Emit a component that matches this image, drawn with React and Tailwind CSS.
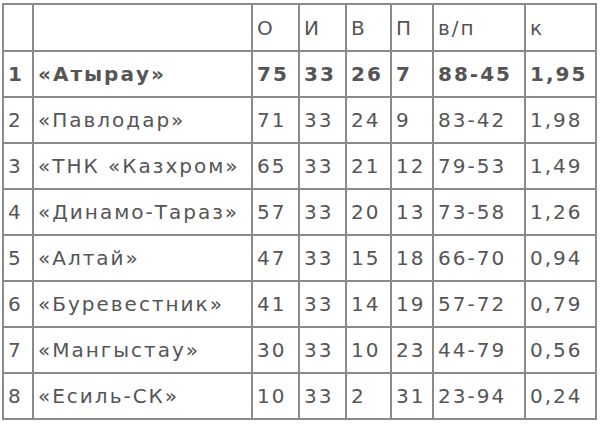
import React from "react";

const rows = [
  ["1", "«Атырау»", "75", "33", "26", "7", "88-45", "1,95"],
  ["2", "«Павлодар»", "71", "33", "24", "9", "83-42", "1,98"],
  ["3", "«ТНК «Казхром»", "65", "33", "21", "12", "79-53", "1,49"],
  ["4", "«Динамо-Тараз»", "57", "33", "20", "13", "73-58", "1,26"],
  ["5", "«Алтай»", "47", "33", "15", "18", "66-70", "0,94"],
  ["6", "«Буревестник»", "41", "33", "14", "19", "57-72", "0,79"],
  ["7", "«Мангыстау»", "30", "33", "10", "23", "44-79", "0,56"],
  ["8", "«Есиль-СК»", "10", "33", "2", "31", "23-94", "0,24"],
];

const widths = [30, 219, 47, 47, 45, 42, 92, 71];

export default function App() {
  return (
    <div className="w-[600px] h-[427px] bg-white pt-[3px] pl-[2px]">
      <table
        className="table-fixed border-collapse border-2 border-[#8a8a8a] text-[#555] text-[20px] tracking-[2px]"
        style={{ fontFamily: '"DejaVu Sans", Verdana, sans-serif' }}
      >
        <colgroup>
          {widths.map((w, i) => (
            <col key={i} style={{ width: w }} />
          ))}
        </colgroup>
        <thead>
          <tr className="h-[47px]">
            {["", "", "О", "И", "В", "П", "в/п", "к"].map((h, i) => (
              <td
                key={i}
                className="border-2 border-[#8a8a8a] px-[4px] align-middle font-normal"
              >
                {h}
              </td>
            ))}
          </tr>
        </thead>
        <tbody>
          {rows.map((r, ri) => (
            <tr key={ri} className={"h-[46px] " + (ri === 0 ? "font-bold" : "")}>
              {r.map((c, ci) => (
                <td
                  key={ci}
                  className="border-2 border-[#8a8a8a] px-[4px] align-middle whitespace-nowrap overflow-hidden"
                >
                  {c}
                </td>
              ))}
            </tr>
          ))}
        </tbody>
      </table>
    </div>
  );
}
